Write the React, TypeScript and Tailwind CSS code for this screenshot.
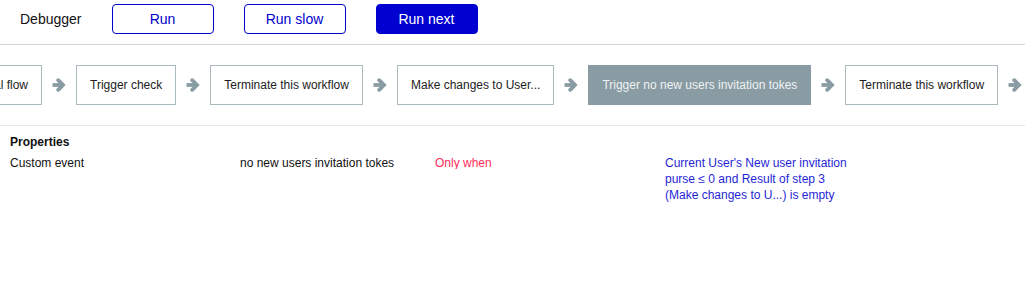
const steps = [
    { label: "Trigger check", active: false },
    { label: "Terminate this workflow", active: false },
    { label: "Make changes to User...", active: false },
    { label: "Trigger no new users invitation tokes", active: true },
    { label: "Terminate this workflow", active: false },
]

function Arrow() {
    return (
        <div className="flex-none w-[14px] mx-[10px] flex items-center justify-center text-[#8a9ca3]">
            <svg width="14" height="14" viewBox="0 0 14 14" fill="none" stroke="currentColor" strokeWidth="3.8">
                <path d="M0.5 7H11" strokeLinecap="butt" />
                <path d="M6.2 2.2L11 7L6.2 11.8" strokeLinecap="round" strokeLinejoin="miter" />
            </svg>
        </div>
    )
}

function Step({ label, active }: { label: string; active: boolean }) {
    return (
        <div
            className={
                active
                    ? "flex-none h-[40px] px-[13px] flex items-center whitespace-nowrap border border-[#8a9ca3] bg-[#8a9ca3] text-[#eef2f3]"
                    : "flex-none h-[40px] px-[13px] flex items-center whitespace-nowrap border border-[#a9b9be] bg-white text-[#222]"
            }
        >
            {label}
        </div>
    )
}

export default function App() {
    return (
        <div className="w-[1025px] h-[295px] bg-white overflow-hidden font-['Liberation_Sans',Arial,sans-serif]">
            <div className="h-[45px] border-b border-[#d4d4d4] flex items-start pt-[4px] pl-[20px]">
                <div className="h-[30px] flex items-center text-[14px] text-[#111]">Debugger</div>
                <div className="flex gap-[30px] ml-[30px]">
                    <button className="w-[102px] h-[30px] rounded-[4px] border border-[#0000cc] text-[14px] text-[#0000cc] bg-white">
                        Run
                    </button>
                    <button className="w-[102px] h-[30px] rounded-[4px] border border-[#0000cc] text-[14px] text-[#0000cc] bg-white">
                        Run slow
                    </button>
                    <button className="w-[102px] h-[30px] rounded-[4px] border border-[#0000d0] text-[14px] text-white bg-[#0000d0]">
                        Run next
                    </button>
                </div>
            </div>

            <div className="py-[20px] border-b border-[#e6e6e6] overflow-hidden">
                <div className="flex text-[12px]">
                    <div className="flex-none w-[130px] ml-[-88px] h-[40px] pr-[13px] flex items-center justify-end whitespace-nowrap border border-[#a9b9be] bg-white text-[#222]">
                        Start initial flow
                    </div>
                    {steps.map((s, i) => (
                        <div key={i} className="flex flex-none">
                            <Arrow />
                            <Step label={s.label} active={s.active} />
                        </div>
                    ))}
                    <Arrow />
                </div>
            </div>

            <div className="pt-[8px] px-[10px] text-[12px] leading-[16px]">
                <div className="font-bold text-[#111]">Properties</div>
                <div className="flex mt-[5px]">
                    <div className="w-[230px] h-[14px] overflow-hidden text-[#111]">Custom event</div>
                    <div className="w-[195px] h-[14px] overflow-hidden text-[#111]">no new users invitation tokes</div>
                    <div className="w-[230px] h-[14px] overflow-hidden text-[#ff2d5a]">Only when</div>
                    <div className="w-[190px] text-[#1f1fd6]">
                        Current User's New user invitation purse ≤ 0 and Result of step 3 (Make changes to U...) is empty
                    </div>
                </div>
            </div>
        </div>
    )
}
